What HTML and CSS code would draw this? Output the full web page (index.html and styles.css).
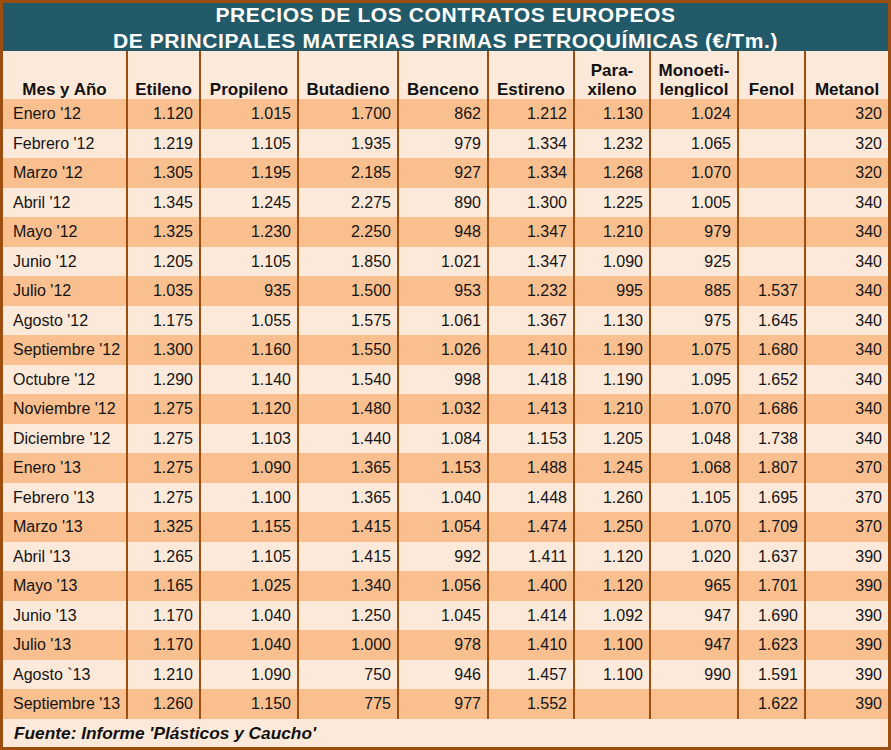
FILE: index.html
```html
<!DOCTYPE html>
<html lang="es">
<head>
<meta charset="utf-8">
<title>Precios de los contratos europeos</title>
<link rel="stylesheet" href="styles.css">
</head>
<body>
<div class="sheet">
  <div class="title"><div class="title-text">PRECIOS DE LOS CONTRATOS EUROPEOS<br>DE PRINCIPALES MATERIAS PRIMAS PETROQUÍMICAS (€/Tm.)</div></div>
  <div class="grid">
    <div class="h"><span>Mes y Año</span></div>
    <div class="h"><span>Etileno</span></div>
    <div class="h"><span>Propileno</span></div>
    <div class="h"><span>Butadieno</span></div>
    <div class="h"><span>Benceno</span></div>
    <div class="h"><span>Estireno</span></div>
    <div class="h"><span>Para-</span><span>xileno</span></div>
    <div class="h"><span>Monoeti-</span><span class="clip">lenglicol</span></div>
    <div class="h"><span>Fenol</span></div>
    <div class="h"><span>Metanol</span></div>

    <div class="row o"><div class="m">Enero '12</div><div>1.120</div><div>1.015</div><div>1.700</div><div>862</div><div>1.212</div><div>1.130</div><div>1.024</div><div></div><div>320</div></div>
    <div class="row l"><div class="m">Febrero '12</div><div>1.219</div><div>1.105</div><div>1.935</div><div>979</div><div>1.334</div><div>1.232</div><div>1.065</div><div></div><div>320</div></div>
    <div class="row o"><div class="m">Marzo '12</div><div>1.305</div><div>1.195</div><div>2.185</div><div>927</div><div>1.334</div><div>1.268</div><div>1.070</div><div></div><div>320</div></div>
    <div class="row l"><div class="m">Abril '12</div><div>1.345</div><div>1.245</div><div>2.275</div><div>890</div><div>1.300</div><div>1.225</div><div>1.005</div><div></div><div>340</div></div>
    <div class="row o"><div class="m">Mayo '12</div><div>1.325</div><div>1.230</div><div>2.250</div><div>948</div><div>1.347</div><div>1.210</div><div>979</div><div></div><div>340</div></div>
    <div class="row l"><div class="m">Junio '12</div><div>1.205</div><div>1.105</div><div>1.850</div><div>1.021</div><div>1.347</div><div>1.090</div><div>925</div><div></div><div>340</div></div>
    <div class="row o"><div class="m">Julio '12</div><div>1.035</div><div>935</div><div>1.500</div><div>953</div><div>1.232</div><div>995</div><div>885</div><div>1.537</div><div>340</div></div>
    <div class="row l"><div class="m">Agosto '12</div><div>1.175</div><div>1.055</div><div>1.575</div><div>1.061</div><div>1.367</div><div>1.130</div><div>975</div><div>1.645</div><div>340</div></div>
    <div class="row o"><div class="m">Septiembre '12</div><div>1.300</div><div>1.160</div><div>1.550</div><div>1.026</div><div>1.410</div><div>1.190</div><div>1.075</div><div>1.680</div><div>340</div></div>
    <div class="row l"><div class="m">Octubre '12</div><div>1.290</div><div>1.140</div><div>1.540</div><div>998</div><div>1.418</div><div>1.190</div><div>1.095</div><div>1.652</div><div>340</div></div>
    <div class="row o"><div class="m">Noviembre '12</div><div>1.275</div><div>1.120</div><div>1.480</div><div>1.032</div><div>1.413</div><div>1.210</div><div>1.070</div><div>1.686</div><div>340</div></div>
    <div class="row l"><div class="m">Diciembre '12</div><div>1.275</div><div>1.103</div><div>1.440</div><div>1.084</div><div>1.153</div><div>1.205</div><div>1.048</div><div>1.738</div><div>340</div></div>
    <div class="row o"><div class="m">Enero '13</div><div>1.275</div><div>1.090</div><div>1.365</div><div>1.153</div><div>1.488</div><div>1.245</div><div>1.068</div><div>1.807</div><div>370</div></div>
    <div class="row l"><div class="m">Febrero '13</div><div>1.275</div><div>1.100</div><div>1.365</div><div>1.040</div><div>1.448</div><div>1.260</div><div>1.105</div><div>1.695</div><div>370</div></div>
    <div class="row o"><div class="m">Marzo '13</div><div>1.325</div><div>1.155</div><div>1.415</div><div>1.054</div><div>1.474</div><div>1.250</div><div>1.070</div><div>1.709</div><div>370</div></div>
    <div class="row l"><div class="m">Abril '13</div><div>1.265</div><div>1.105</div><div>1.415</div><div>992</div><div>1.411</div><div>1.120</div><div>1.020</div><div>1.637</div><div>390</div></div>
    <div class="row o"><div class="m">Mayo '13</div><div>1.165</div><div>1.025</div><div>1.340</div><div>1.056</div><div>1.400</div><div>1.120</div><div>965</div><div>1.701</div><div>390</div></div>
    <div class="row l"><div class="m">Junio '13</div><div>1.170</div><div>1.040</div><div>1.250</div><div>1.045</div><div>1.414</div><div>1.092</div><div>947</div><div>1.690</div><div>390</div></div>
    <div class="row o"><div class="m">Julio '13</div><div>1.170</div><div>1.040</div><div>1.000</div><div>978</div><div>1.410</div><div>1.100</div><div>947</div><div>1.623</div><div>390</div></div>
    <div class="row l"><div class="m">Agosto `13</div><div>1.210</div><div>1.090</div><div>750</div><div>946</div><div>1.457</div><div>1.100</div><div>990</div><div>1.591</div><div>390</div></div>
    <div class="row o"><div class="m">Septiembre '13</div><div>1.260</div><div>1.150</div><div>775</div><div>977</div><div>1.552</div><div></div><div></div><div>1.622</div><div>390</div></div>
  </div>
  <div class="foot">Fuente: Informe 'Plásticos y Caucho'</div>
</div>
</body>
</html>
```
FILE: styles.css
```css
html, body {
  margin: 0;
  padding: 0;
  background: #ffffff;
}

.sheet {
  width: 885px;
  border: 3px solid #9c4d10;
  font-family: "Liberation Sans", Arial, sans-serif;
  color: #141414;
}

.title {
  height: 48px;
  background: #225a69;
  color: #ffffff;
  font-weight: bold;
  font-size: 21px;
  letter-spacing: 0.6px;
  line-height: 26px;
  text-align: center;
  overflow: visible;
}

.title-text {
  position: relative;
  top: -1px;
}

.grid {
  display: grid;
  grid-template-columns: 123px 71px 96px 98px 88px 84px 74px 86px 65px 82px;
  grid-template-rows: 48px;
  grid-auto-rows: 29.5px;
  column-gap: 2px;
  background: #9c4d10;
}

.h {
  background: #fde9d9;
  display: flex;
  flex-direction: column;
  justify-content: flex-end;
  align-items: center;
  font-weight: bold;
  font-size: 17px;
  line-height: 19px;
  color: #111111;
  overflow: hidden;
}

.h .clip {
  display: block;
  height: 17px;
  overflow: hidden;
  margin-bottom: 2px;
}

.row {
  display: contents;
}

.row > div {
  font-size: 16px;
  line-height: 29.5px;
  text-align: right;
  padding: 0 6px 0 0;
  white-space: nowrap;
  overflow: hidden;
}

.row > div.m {
  text-align: left;
  padding: 0 0 0 10px;
}

.row.o > div {
  background: #fabf8f;
}

.row.l > div {
  background: #fde9d9;
}

.foot {
  height: 28px;
  background: #fde9d9;
  font-weight: bold;
  font-style: italic;
  font-size: 17.3px;
  line-height: 28px;
  padding-left: 11px;
  color: #111111;
}
```
